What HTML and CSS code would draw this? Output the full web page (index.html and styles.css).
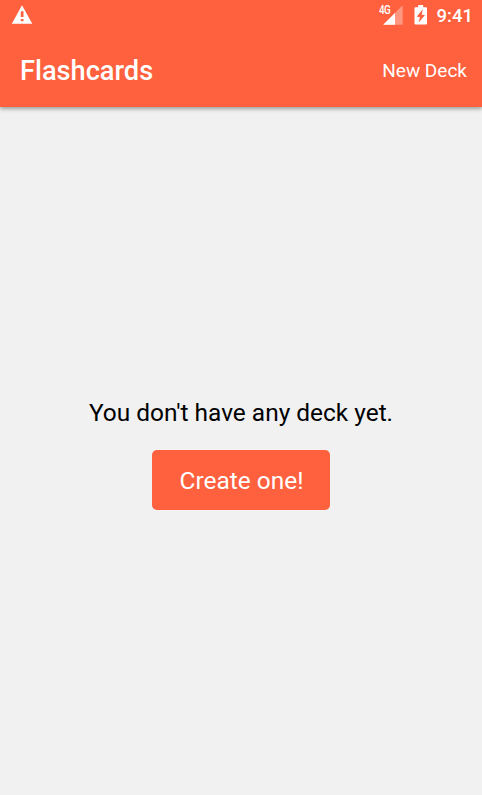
FILE: index.html
```html
<!DOCTYPE html>
<html lang="en">
<head>
<meta charset="utf-8">
<title>Flashcards</title>
<link rel="stylesheet" href="styles.css">
</head>
<body>
<header class="header">
  <div class="status">
    <svg class="warning" width="22" height="20" viewBox="0 0 22 20"><path fill="#fff" fill-rule="evenodd" d="M11 1.300 21.300 19.700H.8ZM9.800 7.300V13h2.700V7.300ZM9.800 15v2.300h2.700V15Z"/></svg>
    <div class="status-right">
      <svg class="signal" width="26" height="22" viewBox="0 0 26 22"><path fill="#fff" fill-opacity=".35" d="M24.700 1.300V20.800H5.200Z"/><path fill="#fff" d="M17 9V20.800H5.200Z"/><text class="network" x="1.200" y="10" transform="scale(.79 1)">4G</text></svg>
      <svg class="battery" width="14" height="20" viewBox="0 0 14 20"><path fill="#fff" fill-rule="evenodd" d="M4.200 0h5v2.200H12q1 0 1 1V18.500q0 1-1 1H1.500q-1 0-1-1V3.200q0-1 1-1h2.700ZM8.800 4.300 2.700 11.700 5.900 12 4.700 17.500 11 10 7.700 9.700Z"/></svg>
      <span class="time">9:41</span>
    </div>
  </div>
  <div class="toolbar">
    <h1 class="title">Flashcards</h1>
    <a class="new-deck">New Deck</a>
  </div>
</header>
<main class="empty">
  <p class="message">You don't have any deck yet.</p>
  <button class="create">Create one!</button>
</main>
</body>
</html>
```
FILE: styles.css
```css
* { box-sizing: border-box; }
body { margin: 0; height: 795px; display: flex; flex-direction: column; background: #f1f1f1; font-family: Roboto, sans-serif; overflow: hidden; }
.header { height: 107px; background: #ff603d; color: #fff; box-shadow: 0 2px 4px rgba(0,0,0,.35); }
.status { height: 32px; display: flex; justify-content: space-between; padding: 4px 10px 0 11px; }
.status-right { display: flex; }
.signal { margin-right: 10px; }
.battery { margin: 1px 9px 0 0; }
.network { font: 500 12.500px Roboto, sans-serif; letter-spacing: -.8px; fill: #fff; }
.time { font-size: 18.500px; line-height: 24px; font-weight: 500; margin-right: -1px; }
.toolbar { height: 75px; display: flex; align-items: center; justify-content: space-between; padding: 2px 15px 0 20px; }
.title { margin: 0; font-size: 27.200px; font-weight: 500; }
.new-deck { font-size: 19px; }
.empty { flex: 1; display: flex; flex-direction: column; align-items: center; padding-top: 291px; }
.message { margin: 0 0 21.700px; font-size: 24.450px; line-height: 30px; color: #000; }
.create { width: 177.500px; height: 60px; border: 0; border-radius: 5px; padding: 2px 0 0 1px; background: #ff603d; color: #fff; font: 24.450px Roboto, sans-serif; }
```
